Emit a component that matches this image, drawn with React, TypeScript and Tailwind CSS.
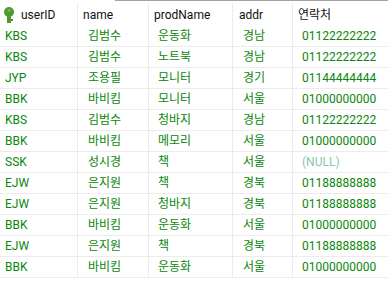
import React from 'react';

const rows: [string, string, string, string, string][] = [
  ['KBS', '김범수', '운동화', '경남', '01122222222'],
  ['KBS', '김범수', '노트북', '경남', '01122222222'],
  ['JYP', '조용필', '모니터', '경기', '01144444444'],
  ['BBK', '바비킴', '모니터', '서울', '01000000000'],
  ['KBS', '김범수', '청바지', '경남', '01122222222'],
  ['BBK', '바비킴', '메모리', '서울', '01000000000'],
  ['SSK', '성시경', '책', '서울', ''],
  ['EJW', '은지원', '책', '경북', '01188888888'],
  ['EJW', '은지원', '청바지', '경북', '01188888888'],
  ['BBK', '바비킴', '운동화', '서울', '01000000000'],
  ['EJW', '은지원', '책', '경북', '01188888888'],
  ['BBK', '바비킴', '운동화', '서울', '01000000000'],
];

const font = { fontFamily: 'Roboto, "Noto Sans CJK KR", sans-serif' };

const KeyIcon = () => (
  <svg width="12" height="16" viewBox="0 0 12 16" className="shrink-0">
    <circle cx="6" cy="5" r="5" fill="#4f9a2c" />
    <rect x="4.5" y="2.5" width="3" height="2" rx="0.5" fill="#ffffff" opacity="0.35" />
    <rect x="4" y="9" width="4" height="7" fill="#4f9a2c" />
    <rect x="8" y="12" width="2" height="2" fill="#4f9a2c" />
  </svg>
);

export default function App() {
  const cell = 'flex items-center h-[21px] border-b border-[#ececec] whitespace-nowrap overflow-hidden';
  const sep = 'border-r border-r-[#ececec]';
  return (
    <div className="w-[388px] h-[294px] bg-white overflow-hidden text-[12px]" style={font}>
      <div className="h-px ml-[115px] bg-[#a3a3a3]" />
      <div className="grid grid-cols-[78px_71px_84px_60px_1fr] mt-[2px] h-[23px] text-[#111]">
        <div className={`flex items-center gap-[6px] pl-[3px] ${sep}`}>
          <KeyIcon />
          <span>userID</span>
        </div>
        <div className={`flex items-center pl-[5px] ${sep}`}>name</div>
        <div className={`flex items-center pl-[5px] ${sep}`}>prodName</div>
        <div className={`flex items-center pl-[6px] ${sep}`}>addr</div>
        <div className="flex items-center pl-[5px]">연락처</div>
      </div>
      <div className="grid grid-cols-[78px_71px_84px_60px_1fr] text-[#0b870b]">
        {rows.map((r, i) => (
          <React.Fragment key={i}>
            <div className={`${cell} ${sep} pl-[5px]`}>{r[0]}</div>
            <div className={`${cell} ${sep} pl-[10px]`}>{r[1]}</div>
            <div className={`${cell} ${sep} pl-[9px]`}>{r[2]}</div>
            <div className={`${cell} ${sep} pl-[10px]`}>{r[3]}</div>
            <div className={`${cell} pl-[9px]`}>
              {r[4] ? r[4] : <span className="text-[#86c9a6]">(NULL)</span>}
            </div>
          </React.Fragment>
        ))}
      </div>
    </div>
  );
}
